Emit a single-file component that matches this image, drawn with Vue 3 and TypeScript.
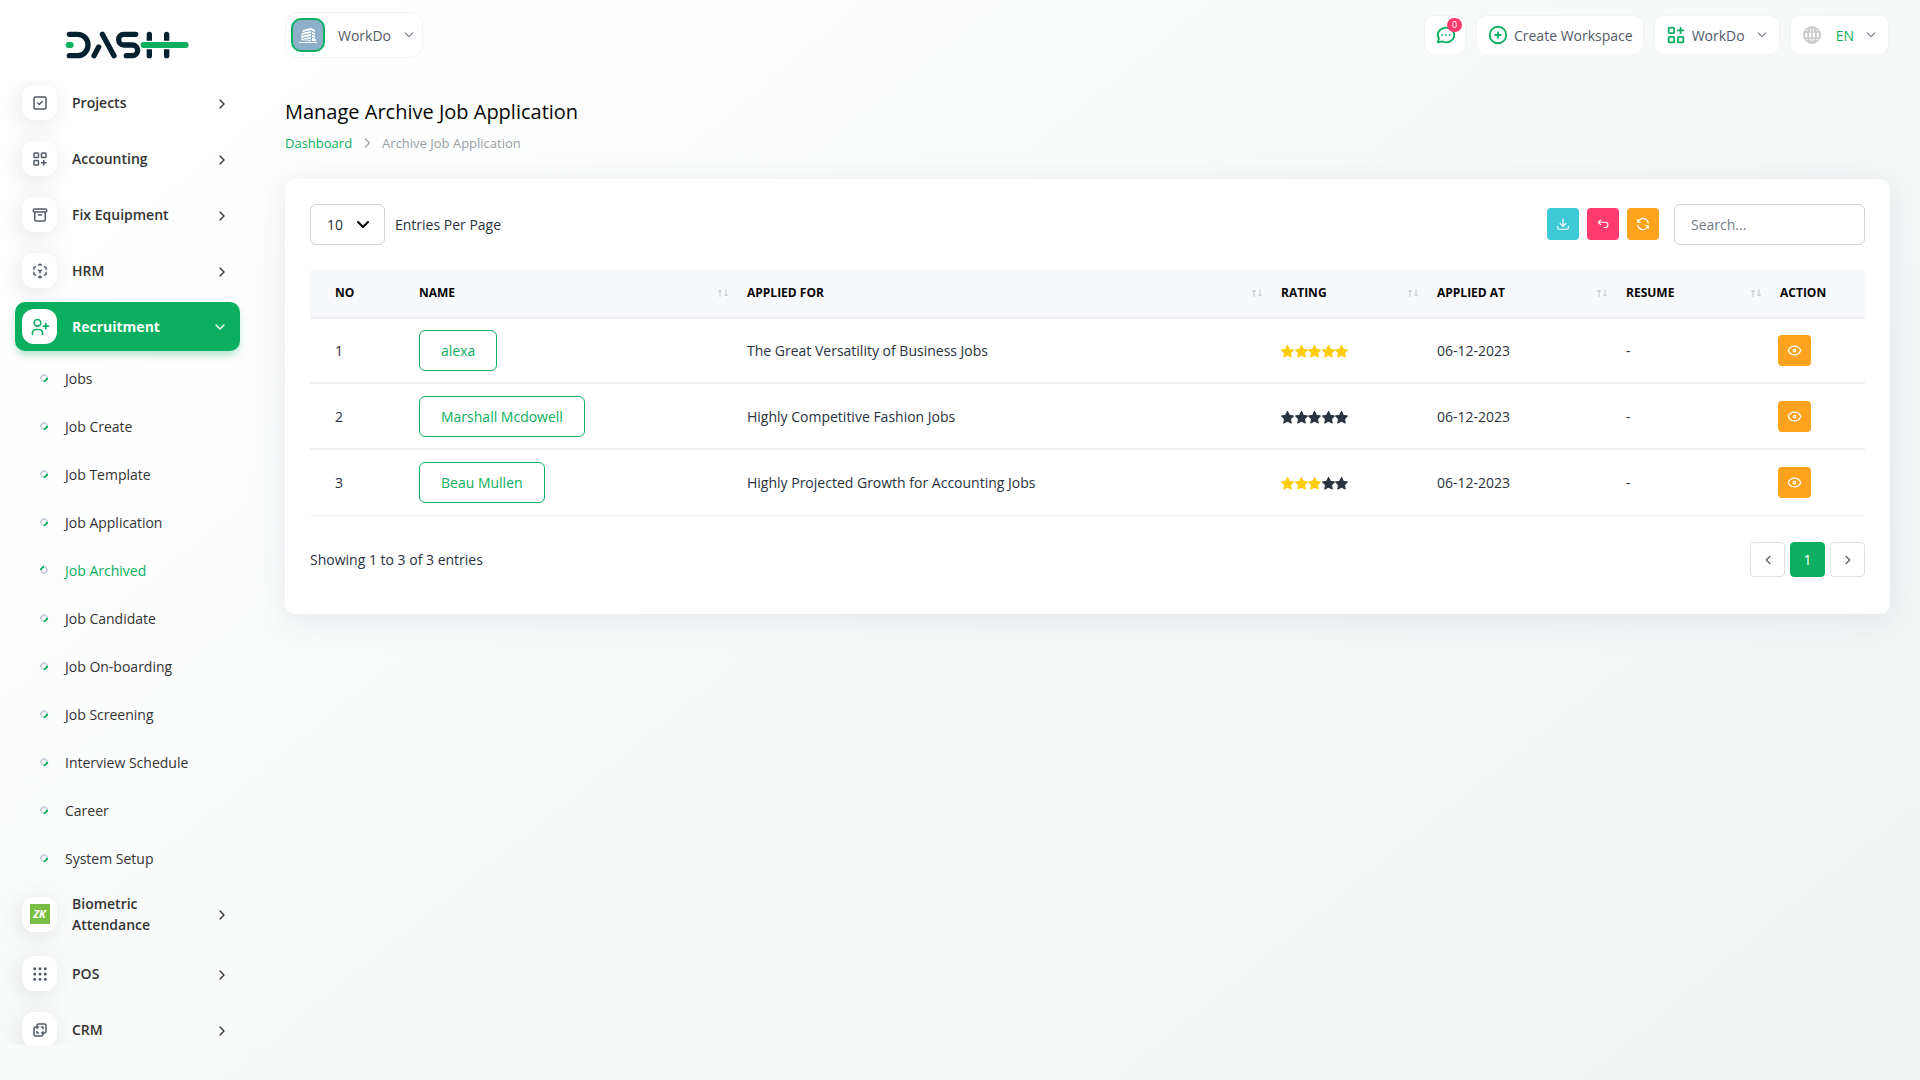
<script setup lang="ts">
import { ref } from 'vue'

interface MenuItem {
  label: string
  icon: string
}

interface Application {
  no: number
  name: string
  job: string
  rating: number
  appliedAt: string
}

const icons: Record<string, string> = {
  projects: '<rect x="4" y="4" width="16" height="16" rx="2"/><path d="M9 12l2 2 4-4"/>',
  accounting:
    '<rect x="4" y="4" width="6" height="6" rx="1"/><rect x="14" y="4" width="6" height="6" rx="1"/><rect x="4" y="14" width="6" height="6" rx="1"/><path d="M14 17h6M17 14v6"/>',
  equipment:
    '<rect x="3" y="4" width="18" height="4" rx="2"/><path d="M5 8v10a2 2 0 0 0 2 2h10a2 2 0 0 0 2-2V8M10 12h4"/>',
  hrm: '<path d="M6 17.6l-2-1.1V14M4 10V7.5l2-1.1M10 4.1L12 3l2 1.1M18 6.4l2 1.1V10M20 14v2.5l-2 1.1M14 19.9L12 21l-2-1.1M12 12l2-1.1M12 12v2.5M12 18.5V21M12 12l-2-1.1"/>',
  pos: '<g fill="currentColor"><circle cx="5" cy="5" r="1"/><circle cx="12" cy="5" r="1"/><circle cx="19" cy="5" r="1"/><circle cx="5" cy="12" r="1"/><circle cx="12" cy="12" r="1"/><circle cx="19" cy="12" r="1"/><circle cx="5" cy="19" r="1"/><circle cx="12" cy="19" r="1"/><circle cx="19" cy="19" r="1"/></g>',
  crm: '<path d="M16 16v2a2 2 0 0 1-2 2H6a2 2 0 0 1-2-2v-8a2 2 0 0 1 2-2h2V6a2 2 0 0 1 2-2h8a2 2 0 0 1 2 2v8a2 2 0 0 1-2 2h-2M10 8H8v2M8 14v2h2M14 8h2v2M16 14v2h-2"/>',
}

const topItems: MenuItem[] = [
  { label: 'Projects', icon: 'projects' },
  { label: 'Accounting', icon: 'accounting' },
  { label: 'Fix Equipment', icon: 'equipment' },
  { label: 'HRM', icon: 'hrm' },
]

const bottomItems: MenuItem[] = [
  { label: 'POS', icon: 'pos' },
  { label: 'CRM', icon: 'crm' },
]

const recruitment: string[] = [
  'Jobs',
  'Job Create',
  'Job Template',
  'Job Application',
  'Job Archived',
  'Job Candidate',
  'Job On-boarding',
  'Job Screening',
  'Interview Schedule',
  'Career',
  'System Setup',
]
const activePage = 'Job Archived'

const columns = [
  { key: 'no', label: 'No', sortable: false },
  { key: 'name', label: 'Name', sortable: true },
  { key: 'job', label: 'Applied For', sortable: true },
  { key: 'rating', label: 'Rating', sortable: true },
  { key: 'date', label: 'Applied At', sortable: true },
  { key: 'resume', label: 'Resume', sortable: true },
  { key: 'action', label: 'Action', sortable: false },
]

const rows: Application[] = [
  { no: 1, name: 'alexa', job: 'The Great Versatility of Business Jobs', rating: 5, appliedAt: '06-12-2023' },
  { no: 2, name: 'Marshall Mcdowell', job: 'Highly Competitive Fashion Jobs', rating: 0, appliedAt: '06-12-2023' },
  { no: 3, name: 'Beau Mullen', job: 'Highly Projected Growth for Accounting Jobs', rating: 3, appliedAt: '06-12-2023' },
]

const perPage = ref('10')
const search = ref('')
</script>

<template>
  <div class="layout">
    <aside class="sidebar">
      <a href="#" class="logo" aria-label="Dash">
        <svg width="124" height="28" viewBox="16 33 372 84" fill="none" stroke="#04212f" stroke-width="16" stroke-linecap="round" stroke-linejoin="round">
          <path d="M29 43H54a31 32 0 0 1 0 64H29" />
          <path d="M117 81L103 107M128 43L163 107" />
          <path d="M228 43H192a15 16 0 0 0 0 32h26a16 16 0 0 1 0 32H200" />
          <path d="M269 43v64M321 43v64" />
          <path d="M254 75H380" stroke="#fff" stroke-width="26" stroke-linecap="butt" />
          <path d="M27 75h6M252 75H378" stroke="#0caf60" stroke-width="18" />
        </svg>
      </a>
      <nav class="nav-scroll">
        <ul class="menu">
          <li v-for="item in topItems" :key="item.label">
            <a href="#" class="menu-link">
              <span class="menu-icon"><svg class="line" width="18" height="18" viewBox="0 0 24 24" v-html="icons[item.icon]" /></span>
              <span class="menu-label">{{ item.label }}</span>
              <svg class="line arrow" width="16" height="16" viewBox="0 0 24 24"><path d="M9 6l6 6-6 6" /></svg>
            </a>
          </li>
          <li class="expanded">
            <a href="#" class="menu-link active">
              <span class="menu-icon">
                <svg class="line" width="20" height="20" viewBox="0 0 24 24"><circle cx="9" cy="7" r="4" /><path d="M3 21v-2a4 4 0 0 1 4-4h4a4 4 0 0 1 4 4v2M16 11h6M19 8v6" /></svg>
              </span>
              <span class="menu-label">Recruitment</span>
              <svg class="line arrow" width="16" height="16" viewBox="0 0 24 24"><path d="M6 9l6 6 6-6" /></svg>
            </a>
            <ul class="submenu">
              <li v-for="page in recruitment" :key="page">
                <a href="#" class="sub-link" :class="{ current: page === activePage }"><span class="bullet" />{{ page }}</a>
              </li>
            </ul>
          </li>
          <li>
            <a href="#" class="menu-link">
              <span class="menu-icon"><span class="zk">ZK</span></span>
              <span class="menu-label">Biometric Attendance</span>
              <svg class="line arrow" width="16" height="16" viewBox="0 0 24 24"><path d="M9 6l6 6-6 6" /></svg>
            </a>
          </li>
          <li v-for="item in bottomItems" :key="item.label">
            <a href="#" class="menu-link">
              <span class="menu-icon"><svg class="line" width="18" height="18" viewBox="0 0 24 24" v-html="icons[item.icon]" /></span>
              <span class="menu-label">{{ item.label }}</span>
              <svg class="line arrow" width="16" height="16" viewBox="0 0 24 24"><path d="M9 6l6 6-6 6" /></svg>
            </a>
          </li>
        </ul>
      </nav>
    </aside>

    <div class="main">
      <header class="topbar">
        <button type="button" class="profile">
          <span class="avatar">
            <svg width="18" height="15" viewBox="0 0 18 15">
              <path fill="#fff" d="M4 2l8-2v2L3 4zM3 5l9-2v2L2 7zM2 8l10-2v2L2 10zM2 11l10-2v2L2 12zM2 13l10-1v1H2zM12 0l4 2v2l-4-2zM13 4l3 1v2l-3-1zM13 7l3 1v2l-3-1zM13 10l4 1v2h-4zM0 14h18v1H0z" />
            </svg>
          </span>
          <span class="profile-name">WorkDo</span>
          <svg class="line chev" width="10" height="10" viewBox="0 0 24 24"><path d="M3 7l9 9 9-9" /></svg>
        </button>
        <div class="tools">
          <button type="button" class="tool message" aria-label="Messages">
            <svg class="line green" width="22" height="22" viewBox="0 0 24 24"><path d="M3 20l1.3-3.9A9 8 0 1 1 7.700 19L3 20M12 12v.01M8 12v.01M16 12v.01" /></svg>
            <span class="badge">0</span>
          </button>
          <button type="button" class="tool create">
            <svg class="line green" width="22" height="22" viewBox="0 0 24 24"><circle cx="12" cy="12" r="9" /><path d="M9 12h6M12 9v6" /></svg>
            <span>Create Workspace</span>
          </button>
          <button type="button" class="tool workspace">
            <svg class="line green" width="22" height="22" viewBox="0 0 24 24"><rect x="4" y="4" width="6" height="6" rx="1" /><rect x="4" y="14" width="6" height="6" rx="1" /><rect x="14" y="14" width="6" height="6" rx="1" /><path d="M14 7h6M17 4v6" /></svg>
            <span>WorkDo</span>
            <svg class="line chev" width="10" height="10" viewBox="0 0 24 24"><path d="M3 7l9 9 9-9" /></svg>
          </button>
          <button type="button" class="tool language">
            <svg width="18" height="18" viewBox="0 0 18 18" fill="none" stroke="#ccc" stroke-width="2"><circle cx="9" cy="9" r="8" /><ellipse cx="9" cy="9" rx="4" ry="8" /><path d="M1 6h16M1 12h16M9 1v16" stroke-width="1.500" /></svg>
            <span class="green">EN</span>
            <svg class="line chev" width="10" height="10" viewBox="0 0 24 24"><path d="M3 7l9 9 9-9" /></svg>
          </button>
        </div>
      </header>

      <main>
        <h1>Manage Archive Job Application</h1>
        <nav class="breadcrumb" aria-label="Breadcrumb">
          <a href="#">Dashboard</a>
          <svg class="line" width="14" height="14" viewBox="0 0 24 24"><path d="M9 5l7 7-7 7" /></svg>
          <span>Archive Job Application</span>
        </nav>

        <section class="card">
          <div class="controls">
            <div class="select-box">
              <select id="per-page" v-model="perPage">
                <option>10</option>
                <option>25</option>
              </select>
              <svg class="line select-arrow" width="12" height="12" viewBox="0 0 12 12"><path d="M1 3l5 5 5-5" /></svg>
            </div>
            <label for="per-page">Entries Per Page</label>
            <div class="actions">
              <button type="button" class="square info" aria-label="Export">
                <svg class="line" width="14" height="14" viewBox="0 0 24 24"><path d="M3 16v3a2 2 0 0 0 2 2h14a2 2 0 0 0 2-2v-3M7 11l5 5 5-5M12 3v13" /></svg>
              </button>
              <button type="button" class="square danger" aria-label="Reset">
                <svg class="line" width="14" height="14" viewBox="0 0 24 24"><path d="M8 13L4 9l4-4M4 9h12a4 4 0 0 1 0 9h-2" /></svg>
              </button>
              <button type="button" class="square warning" aria-label="Reload">
                <svg class="line" width="14" height="14" viewBox="0 0 24 24"><path d="M21 10A9 9 0 0 0 5 6L3 9M3 4v5h5M3 14a9 9 0 0 0 16 4l2-3M21 20v-5h-5" /></svg>
              </button>
            </div>
            <input v-model="search" class="search" type="search" placeholder="Search..." aria-label="Search" />
          </div>

          <table>
            <colgroup>
              <col v-for="col in columns" :key="col.key" :class="'col-' + col.key" />
            </colgroup>
            <thead>
              <tr>
                <th v-for="col in columns" :key="col.key" scope="col">
                  <span class="th-inner">
                    {{ col.label }}
                    <svg v-if="col.sortable" class="sort" width="10" height="8" viewBox="0 0 10 8" aria-hidden="true"><path d="M2 8V1M0 2h4M8 0v7M6 6h4" /></svg>
                  </span>
                </th>
              </tr>
            </thead>
            <tbody>
              <tr v-for="row in rows" :key="row.no">
                <td>{{ row.no }}</td>
                <td><a href="#" class="name-btn">{{ row.name }}</a></td>
                <td>{{ row.job }}</td>
                <td>
                  <span class="stars" role="img" :aria-label="row.rating + ' of 5'">
                    <svg v-for="n in 5" :key="n" :class="{ filled: n <= row.rating }" width="13" height="13" viewBox="0 0 24 24"><path stroke-width="2" stroke-linejoin="round" d="M12 1l3.400 7 7.600 1.200-5.500 5.400 1.300 7.700L12 18.700l-6.800 3.600 1.300-7.700L1 9.200 8.600 8z" /></svg>
                  </span>
                </td>
                <td>{{ row.appliedAt }}</td>
                <td>-</td>
                <td>
                  <button type="button" class="view" aria-label="View">
                    <svg class="line" width="15" height="15" viewBox="0 0 24 24"><circle cx="12" cy="12" r="2" /><path d="M2 12C4 7 8 5 12 5s8 2 10 7c-2 5-6 7-10 7s-8-2-10-7" /></svg>
                  </button>
                </td>
              </tr>
            </tbody>
          </table>

          <div class="footer">
            <span>Showing 1 to 3 of 3 entries</span>
            <nav class="pager" aria-label="Pages">
              <button type="button" aria-label="Previous"><svg class="line bold" width="14" height="14" viewBox="0 0 24 24"><path d="M15 6l-6 6 6 6" /></svg></button>
              <button type="button" class="on">1</button>
              <button type="button" aria-label="Next"><svg class="line bold" width="14" height="14" viewBox="0 0 24 24"><path d="M9 6l6 6-6 6" /></svg></button>
            </nav>
          </div>
        </section>
      </main>
    </div>
  </div>
</template>

<style>
body {
  margin: 0;
  background: #fff;
}
</style>

<style scoped>
* {
  box-sizing: border-box;
}
.layout {
  display: flex;
  height: 100vh;
  overflow: hidden;
  font: 14px/21px 'Open Sans', 'Noto Sans', sans-serif;
  color: #293240;
  background: linear-gradient(141deg, #fff 3%, #f0f4f3 100%);
}
button,
input,
select {
  font: inherit;
  color: inherit;
  margin: 0;
}
button {
  cursor: pointer;
}
a {
  color: inherit;
  text-decoration: none;
}
ul {
  list-style: none;
  margin: 0;
  padding: 0;
}
svg {
  flex: none;
}
.line {
  fill: none;
  stroke: currentColor;
  stroke-width: 2;
  stroke-linecap: round;
  stroke-linejoin: round;
}
.bold {
  stroke-width: 3;
}
.green {
  color: #0caf60;
}

/* sidebar */
.sidebar {
  flex: none;
  width: 280px;
  display: flex;
  flex-direction: column;
}
.logo {
  height: 80px;
  flex: none;
  padding: 31px 0 0 65px;
}
.logo svg {
  display: block;
}
.nav-scroll {
  flex: 1;
  overflow: hidden;
  margin-bottom: 35px;
}
.menu {
  padding: 0 40px 0 15px;
  margin-top: -2px;
}
.menu > li {
  margin-bottom: 7px;
}
.menu > .expanded {
  margin-bottom: 4px;
}
.menu-link {
  display: flex;
  align-items: center;
  padding: 7px 10px 7px 7px;
  border-radius: 10px;
  font-weight: 600;
  color: #333;
}
.menu-icon {
  flex: none;
  display: flex;
  align-items: center;
  justify-content: center;
  width: 35px;
  height: 35px;
  margin-right: 15px;
  border-radius: 12px;
  background: #fff;
  color: #525b69;
  box-shadow: -3px 4px 23px rgba(0, 0, 0, 0.1);
}
.menu-label {
  flex: 1;
  padding-right: 40px;
}
.arrow {
  margin-top: 2px;
  color: #333;
}
.active {
  background: #0caf60;
  color: #fff;
  font-weight: 700;
  box-shadow: 0 5px 7px -1px rgba(12, 175, 96, 0.3);
}
.active .menu-icon {
  color: #0caf60;
  box-shadow: none;
}
.active .arrow {
  margin: 0 2px 0 0;
  color: #fff;
}
.zk {
  width: 20px;
  height: 20px;
  background: #78be43;
  color: #fff;
  font: italic 700 11px/20px 'Open Sans', sans-serif;
  text-align: center;
}
.submenu {
  padding-top: 3px;
}
.sub-link {
  display: flex;
  align-items: center;
  height: 48px;
  padding-left: 25px;
  font-weight: 500;
  color: #333;
}
.sub-link.current {
  color: #0caf60;
}
.bullet {
  width: 8px;
  height: 8px;
  margin-right: 17px;
  border: 2px solid #ced4dc;
  border-right-color: #0caf60;
  border-radius: 50%;
  transform: rotate(45deg);
}
.current .bullet {
  transform: rotate(-135deg);
}

/* top bar */
.main {
  flex: 1;
  min-width: 0;
  padding: 13px 30px 30px 5px;
}
.topbar {
  display: flex;
  align-items: center;
  justify-content: space-between;
  height: 44px;
  color: #525b69;
  font-weight: 500;
}
.profile,
.tool {
  display: flex;
  align-items: center;
  background: #fff;
  border: 1px solid #f3f5f5;
  border-radius: 10px;
}
.profile {
  height: 46px;
  padding: 0 8px 0 5px;
  border-radius: 12px;
}
.avatar {
  display: flex;
  align-items: center;
  justify-content: center;
  width: 34px;
  height: 34px;
  border: 2px solid #0caf60;
  border-radius: 10px;
  background: #8eafc9;
}
.profile-name {
  margin: 0 13px;
}
.chev {
  color: #7d858f;
  stroke-width: 3;
}
.tools {
  display: flex;
  gap: 10px;
  margin-right: 1px;
}
.tool {
  height: 40px;
  padding: 0 10px;
}
.message {
  position: relative;
  width: 42px;
}
.badge {
  position: absolute;
  top: 2px;
  right: 3px;
  width: 15px;
  height: 14px;
  border-radius: 7px;
  background: #ff3a6e;
  color: #fff;
  font-size: 9px;
  line-height: 14px;
}
.create svg,
.workspace .green {
  margin-right: 5px;
}
.workspace {
  padding-right: 12px;
}
.workspace .chev,
.language .chev {
  margin-left: 12px;
}
.language {
  padding: 0 12px;
}
.language .green {
  margin-left: 15px;
}

/* page heading */
h1 {
  margin: 43px 0 9px;
  font-size: 20px;
  line-height: 24px;
  font-weight: 500;
  color: #060606;
}
.breadcrumb {
  display: flex;
  align-items: center;
  gap: 8px;
  font-size: 13px;
  line-height: 20px;
  color: #999fa5;
}
.breadcrumb a {
  color: #0caf60;
}

/* card */
.card {
  margin-top: 26px;
  padding: 25px 25px 37px;
  border-radius: 10px;
  background: #fff;
  box-shadow: 0 6px 30px rgba(182, 186, 203, 0.3);
}
.controls {
  display: flex;
  align-items: center;
}
.select-box {
  position: relative;
  margin-right: 10px;
}
select {
  display: block;
  appearance: none;
  width: 75px;
  height: 41px;
  padding: 0 16px;
  border: 1px solid #ced4da;
  border-radius: 6px;
  background: #fff;
}
.select-arrow {
  position: absolute;
  right: 16px;
  top: 15px;
  color: #000;
  pointer-events: none;
}
.actions {
  display: flex;
  gap: 8px;
  margin: 0 15px 1px auto;
}
.square,
.view {
  display: flex;
  align-items: center;
  justify-content: center;
  width: 32px;
  height: 32px;
  padding: 0;
  border: 0;
  border-radius: 4px;
  color: #fff;
}
.info {
  background: #3ec9d6;
}
.danger {
  background: #ff3a6e;
}
.warning,
.view {
  background: #ffa21d;
}
.view {
  width: 33px;
  height: 31px;
  margin-left: -2px;
}
.search {
  width: 191px;
  height: 41px;
  padding: 0 16px;
  border: 1px solid #ced4da;
  border-radius: 6px;
  background: #fff;
}
.search::placeholder {
  color: #757d88;
}

table {
  width: 100%;
  margin-top: 25px;
  table-layout: fixed;
  border-spacing: 0;
}
.col-no {
  width: 94px;
}
.col-name {
  width: 328px;
}
.col-rating {
  width: 156px;
}
.col-date {
  width: 189px;
}
.col-resume {
  width: 154px;
}
.col-action {
  width: 100px;
}
th,
td {
  padding: 0 15px;
  text-align: left;
  border-bottom: 2px solid #f1f1f1;
}
th:first-child,
td:first-child {
  padding-left: 25px;
}
th {
  height: 49px;
  padding: 0 4px 2px 15px;
  background: #f8f9fd;
  color: #060606;
  font-size: 12px;
  font-weight: 700;
  text-transform: uppercase;
}
td {
  height: 66px;
}
tbody tr:first-child td {
  height: 65px;
}
tbody tr:last-child td {
  border-bottom-width: 1px;
}
.th-inner {
  display: flex;
  align-items: center;
  justify-content: space-between;
}
.sort {
  fill: none;
  stroke: #c4c8cf;
}
.name-btn {
  display: inline-block;
  padding: 9px 21px;
  border: 1px solid #0caf60;
  border-radius: 6px;
  color: #0caf60;
  font-weight: 500;
}
.stars {
  display: flex;
  justify-content: space-between;
  width: 67px;
  padding-top: 2px;
}
.stars svg {
  fill: #293240;
  stroke: #293240;
}
.stars .filled {
  fill: #ffcc05;
  stroke: #ffcc05;
}

.footer {
  display: flex;
  align-items: center;
  justify-content: space-between;
  margin-top: 26px;
}
.pager {
  display: flex;
  gap: 5px;
}
.pager button {
  display: flex;
  align-items: center;
  justify-content: center;
  width: 35px;
  height: 35px;
  padding: 0;
  border: 1px solid #dee2e6;
  border-radius: 4px;
  background: #fff;
  color: #6a727d;
}
.pager .on {
  border-color: #0caf60;
  background: #0caf60;
  color: #fff;
}
</style>
